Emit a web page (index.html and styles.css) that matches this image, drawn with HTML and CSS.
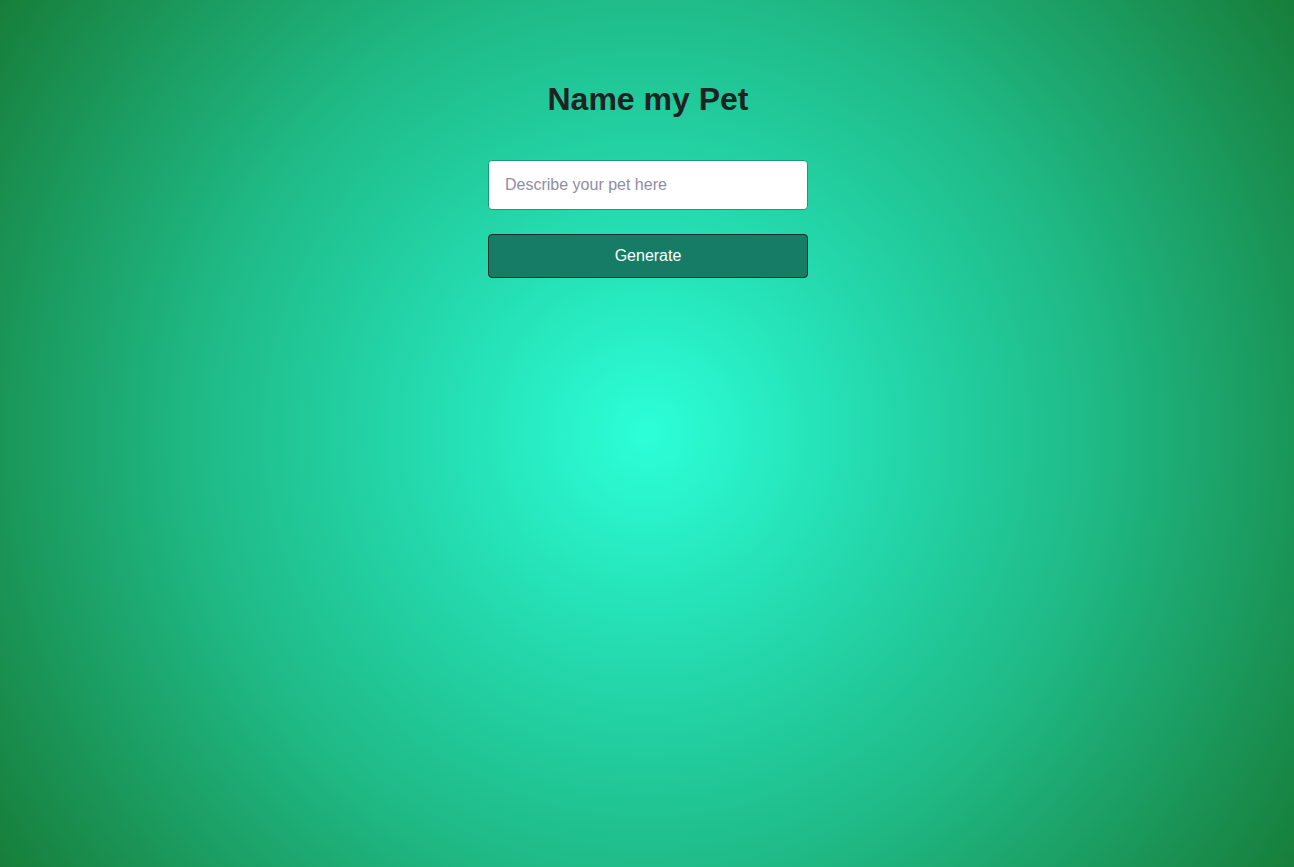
FILE: index.html
```html
<!DOCTYPE html>
<html>
<head>
<meta charset="utf-8">
<title>Name my Pet</title>
<link rel="stylesheet" href="styles.css">
</head>
<body>
<main class="main">
  <h3 class="title">Name my Pet</h3>
  <form class="form">
    <input class="field" type="text" name="animal" placeholder="Describe your pet here">
    <button class="submit" type="button">Generate</button>
  </form>
</main>
</body>
</html>
```
FILE: styles.css
```css
html, body {
  margin: 0;
  padding: 0;
  height: 100%;
}
body {
  font-family: "Liberation Sans", Helvetica, Arial, sans-serif;
  background: radial-gradient(circle farthest-corner at 50% 50%, #2cffd8 0%, #24d9ad 30%, #1fb985 58%, #177e3a 100%);
  min-height: 100vh;
}
.main {
  display: flex;
  flex-direction: column;
  align-items: center;
  padding-top: 60px;
  padding-left: 2px;
}
.title {
  font-size: 32px;
  line-height: 40px;
  font-weight: bold;
  color: #202123;
  margin: 19px 0 41px;
}
.form {
  display: flex;
  flex-direction: column;
  width: 320px;
}
.field {
  box-sizing: border-box;
  height: 50px;
  padding: 12px 16px;
  border: 1px solid #199a78;
  border-radius: 4px;
  margin: 0 0 24px;
  font-family: inherit;
  font-size: 16px;
  color: #202123;
  background: #fff;
  outline: none;
}
.field::placeholder {
  color: #8e8ea0;
  opacity: 1;
}
.submit {
  box-sizing: border-box;
  height: 44px;
  padding: 0;
  color: #fff;
  background-color: #167c66;
  border: 1px solid #0b2e26;
  border-radius: 4px;
  font-family: inherit;
  font-size: 16px;
  text-align: center;
  cursor: pointer;
}
```
